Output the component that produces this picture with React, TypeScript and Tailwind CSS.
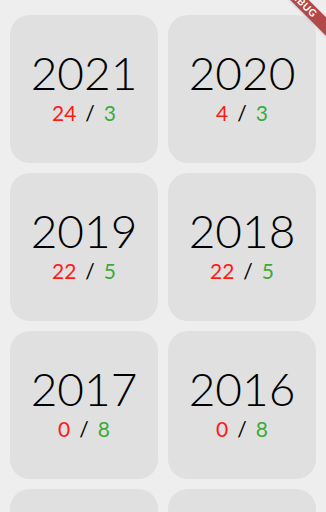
import React from 'react'

const years = [
  { year: '2021', lost: 24, won: 3 },
  { year: '2020', lost: 4, won: 3 },
  { year: '2019', lost: 22, won: 5 },
  { year: '2018', lost: 22, won: 5 },
  { year: '2017', lost: 0, won: 8 },
  { year: '2016', lost: 0, won: 8 },
  { year: '2015', lost: 0, won: 0 },
  { year: '2014', lost: 0, won: 0 },
]

export default function App() {
  return (
    <div className="relative h-[512px] w-[326px] overflow-hidden bg-[#eeeeee] font-['Lato','Liberation_Sans',sans-serif]">
      <div className="grid grid-cols-2 gap-[10px] px-[10px] pt-[15px]">
        {years.map((y) => (
          <div
            key={y.year}
            className="flex h-[148px] flex-col items-center justify-center rounded-[20px] bg-[#e0e0e0] pb-[6px]"
          >
            <div className="text-[46px] font-light leading-none text-black">{y.year}</div>
            <div className="mt-[6px] flex items-center text-[21px] leading-none">
              <span className="text-[#ff1a12]">{y.lost}</span>
              <span className="mx-[9px] text-black">/</span>
              <span className="text-[#3aab3a]">{y.won}</span>
            </div>
          </div>
        ))}
      </div>

      {/* debug banner */}
      <div className="pointer-events-none absolute left-[242px] top-[-4px] h-[13px] w-[120px] rotate-45 bg-[#b24848] text-center text-[10px] font-bold leading-[13px] tracking-[0.5px] text-white shadow-sm">
        DEBUG
      </div>
    </div>
  )
}
